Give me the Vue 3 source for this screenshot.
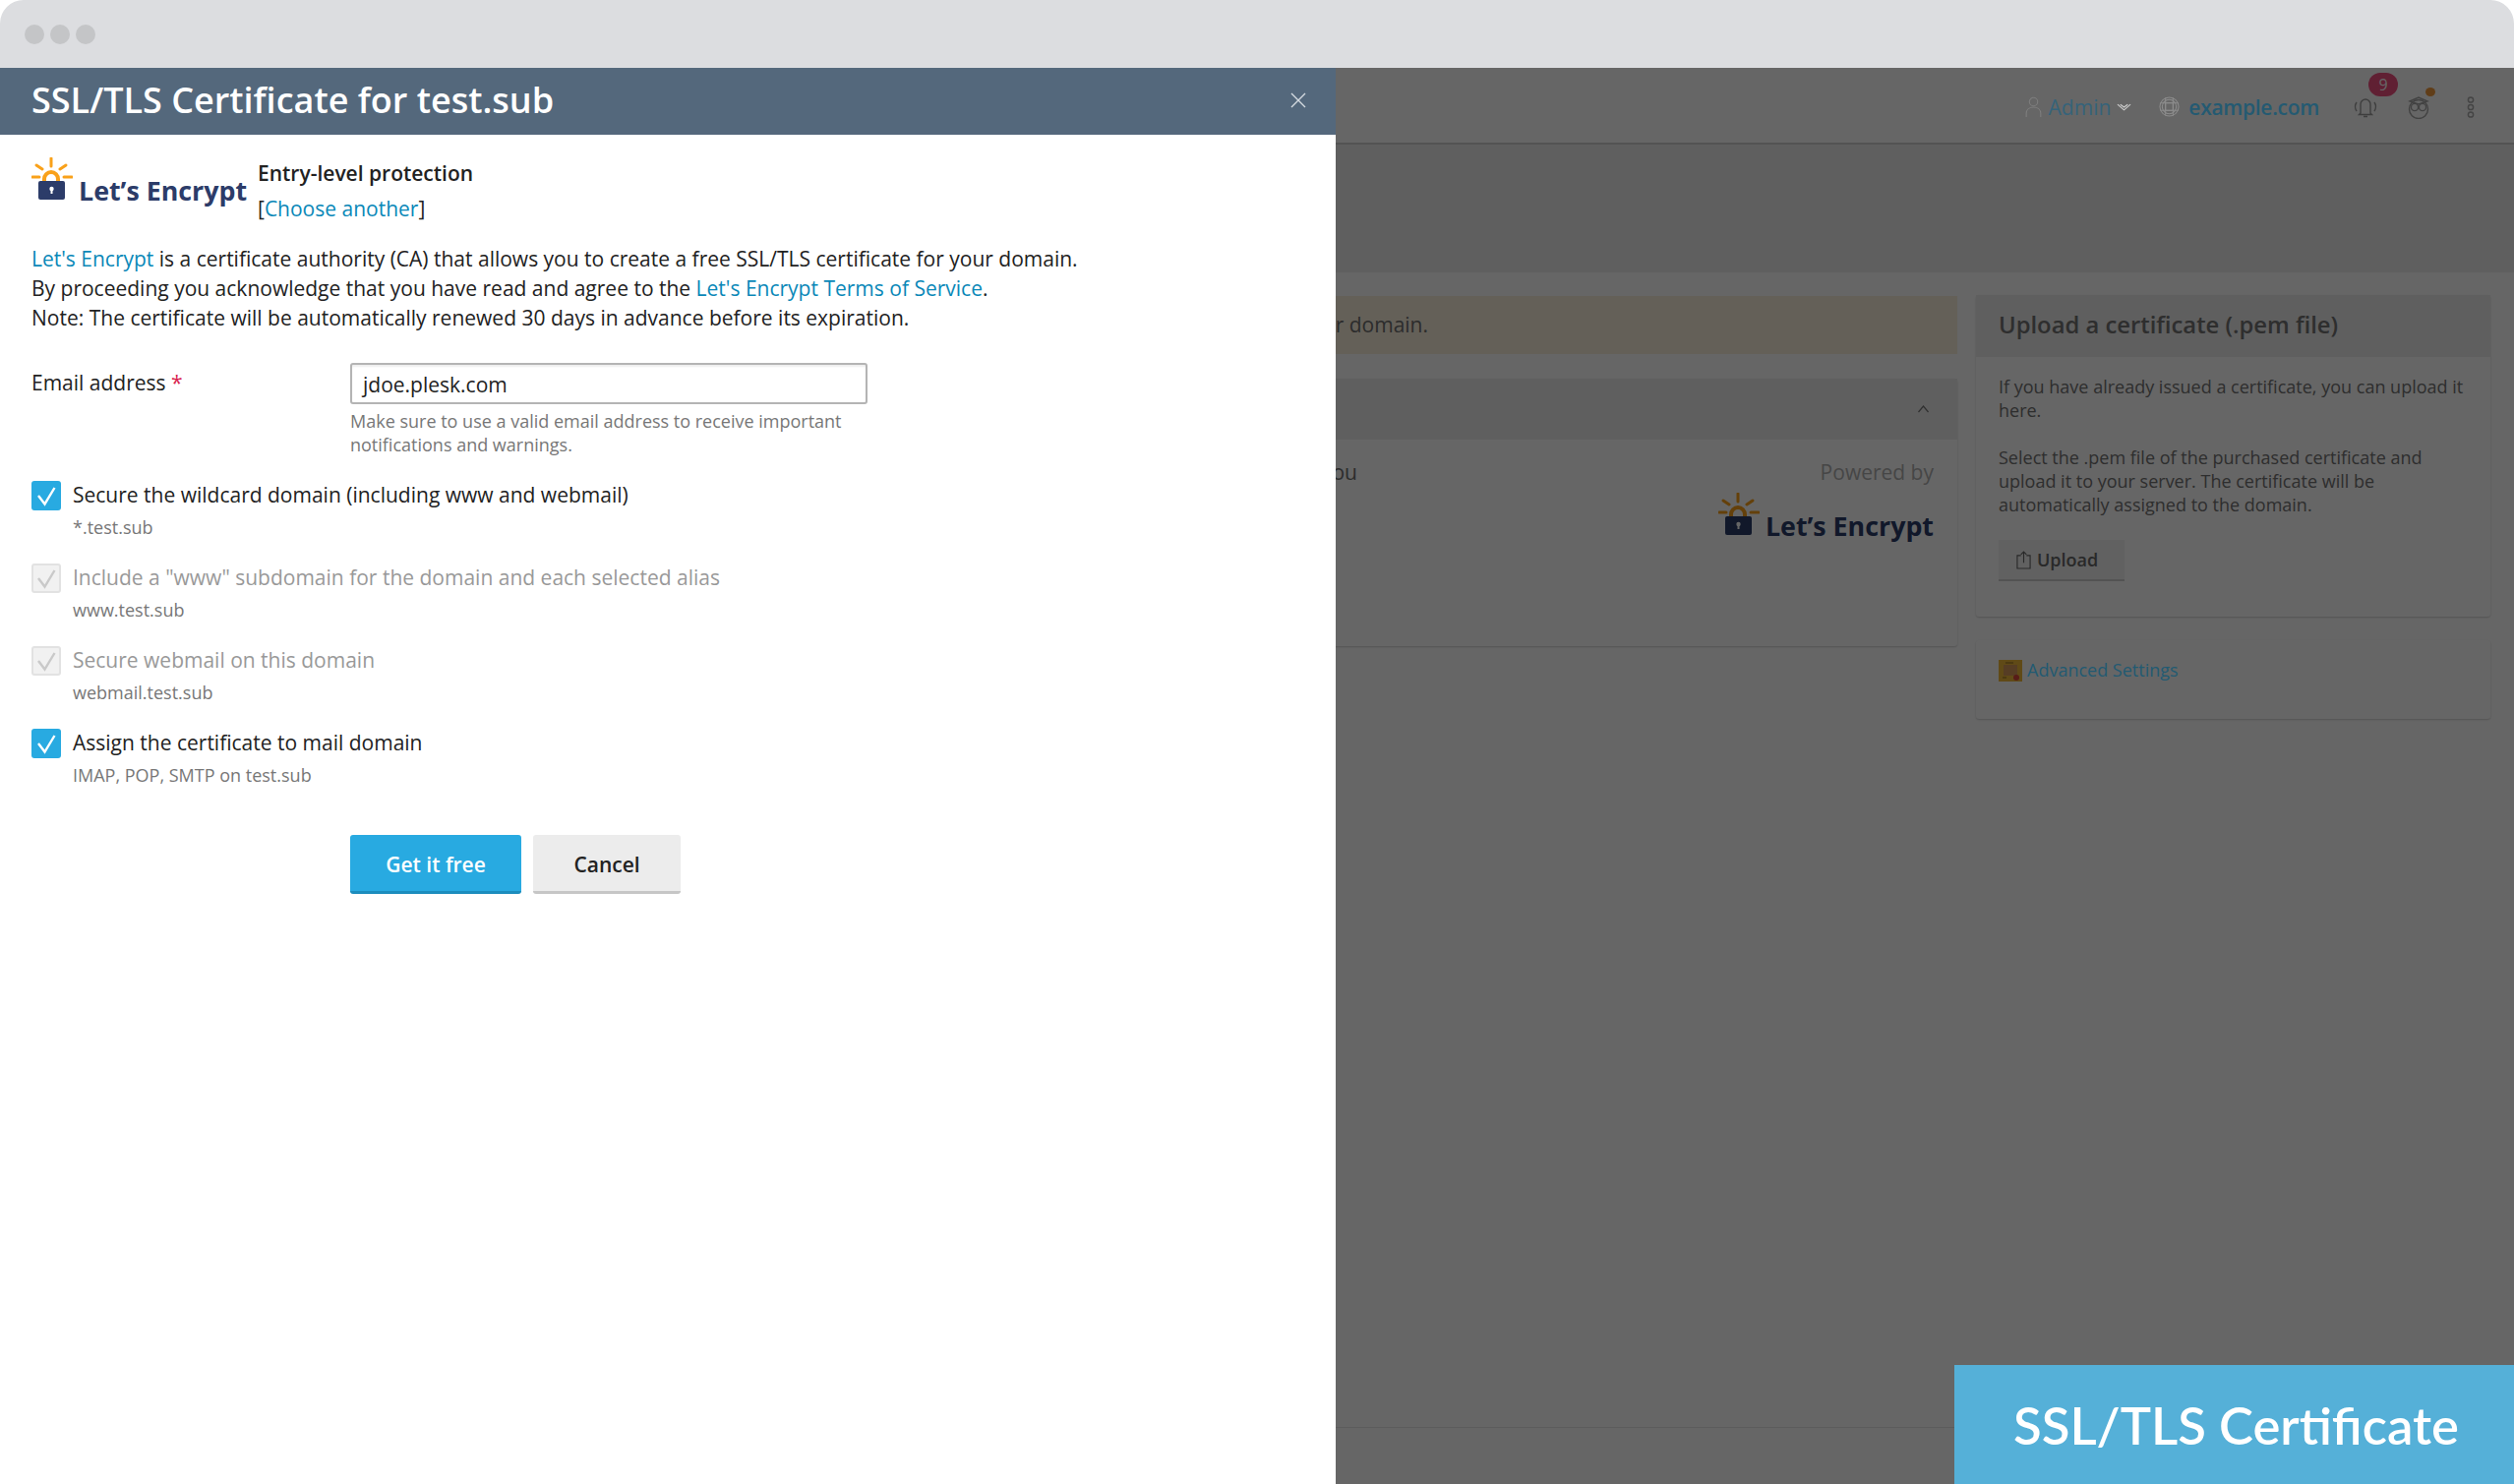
<script setup>
const options = [
  { label: 'Secure the wildcard domain (including www and webmail)', sub: '*.test.sub', disabled: false },
  { label: 'Include a "www" subdomain for the domain and each selected alias', sub: 'www.test.sub', disabled: true },
  { label: 'Secure webmail on this domain', sub: 'webmail.test.sub', disabled: true },
  { label: 'Assign the certificate to mail domain', sub: 'IMAP, POP, SMTP on test.sub', disabled: false },
]
</script>

<template>
  <div class="window">
    <div class="chrome">
      <i class="dot"></i><i class="dot"></i><i class="dot"></i>
    </div>
    <div class="stage">
      <div class="page">
        <header class="topbar">
          <svg class="ic-user" viewBox="0 0 18 24" fill="none" stroke="currentColor" stroke-width="1.2"><circle cx="9" cy="6" r="4.6"/><path d="M1 23v-4c0-4 3-7 8-7s8 3 8 7v4"/></svg>
          <span class="admin">Admin</span>
          <svg class="ic-chev" viewBox="0 0 16 10" fill="none" stroke="currentColor" stroke-width="1.2"><path d="M1 2l7 6 7-6M4 2l4 3 4-3"/></svg>
          <svg class="ic-globe" viewBox="0 0 22 22" fill="none" stroke="currentColor" stroke-width="1.1"><circle cx="11" cy="11" r="10"/><circle cx="11" cy="11" r="7.5"/><rect x="7" y="7" width="8" height="8"/><path d="M7 1.5v19M15 1.5v19M1.5 7h19M1.5 15h19"/></svg>
          <span class="domain">example.com</span>
          <span class="bell">
            <svg viewBox="0 0 26 22" fill="none" stroke="currentColor" stroke-width="1.4"><path d="M8 17V8a5 5 0 0 1 10 0v9l1.5 1.5h-13zM11 20.5h4M4 6c-2 3-2 6 0 9M22 6c2 3 2 6 0 9"/></svg>
            <b class="badge">9</b>
          </span>
          <span class="owl">
            <svg viewBox="0 0 22 24" fill="none" stroke="currentColor" stroke-width="1.4"><circle cx="11" cy="14" r="9.5"/><circle cx="7" cy="12" r="3.6"/><circle cx="15" cy="12" r="3.6"/><path d="M2 6l9-4 9 4-9 3z"/></svg>
            <i class="owl-dot"></i>
          </span>
          <svg class="ic-more" viewBox="0 0 8 22" fill="none" stroke="currentColor" stroke-width="1.5"><circle cx="4" cy="3.5" r="2.6"/><circle cx="4" cy="11" r="2.6"/><circle cx="4" cy="18.5" r="2.6"/></svg>
        </header>
        <div class="title-band"></div>
        <main class="content">
          <div class="col-left">
            <div class="warning">Please note that a certificate is required to secure your domain.</div>
            <section class="panel">
              <div class="panel-head">
                <svg class="ic-up" viewBox="0 0 12 8" fill="none" stroke="currentColor" stroke-width="1.2"><path d="M1 7l5-6 5 6"/></svg>
              </div>
              <div class="panel-body">
                <span class="lead">Choose the certificate that suits you</span>
                <div class="powered">
                  <span class="powered-by">Powered by</span>
                  <span class="le-logo">
                    <svg viewBox="0 0 42 44" class="le-mark"><g stroke="#f9a11a" stroke-width="3" stroke-linecap="round" fill="none"><path d="M20 1v8M5 8l6 4M35 8l-6 4M1 20h7M33 20h8"/><path d="M13 25v-3a7 7 0 0 1 14 0v3" stroke-width="4" stroke-linecap="butt"/></g><rect x="7" y="24" width="27" height="19" rx="2" fill="#2c3c69"/><circle cx="20.5" cy="32" r="2.2" fill="#fff"/><rect x="19.5" y="32" width="2" height="5" fill="#fff"/></svg>
                    <span class="le-text">Let’s Encrypt</span>
                  </span>
                </div>
              </div>
            </section>
          </div>
          <div class="col-right">
            <section class="card">
              <h3 class="card-head">Upload a certificate (.pem file)</h3>
              <div class="card-body">
                <p>If you have already issued a certificate, you can upload it here.</p>
                <p>Select the .pem file of the purchased certificate and upload it to your server. The certificate will be automatically assigned to the domain.</p>
                <span class="upload">
                  <svg viewBox="0 0 16 20" fill="none" stroke="currentColor" stroke-width="1.2"><path d="M5 5H1v14h14V5h-4M8 13V1M5 4l3-3 3 3"/></svg>
                  Upload
                </span>
              </div>
            </section>
            <section class="card adv">
              <svg viewBox="0 0 24 22" class="ic-adv"><rect width="24" height="22" fill="#f0b93a"/><rect x="5" y="5" width="14" height="11" fill="#d89a5a"/><path d="M7 3h8M4 18h4" stroke="#8a6a20"/><circle cx="18" cy="18" r="3" fill="#d9463c"/></svg>
              <a class="adv-link">Advanced Settings</a>
            </section>
          </div>
        </main>
        <footer class="page-foot"></footer>
      </div>

      <div class="overlay"></div>

      <aside class="drawer">
        <div class="drawer-head">
          <h2>SSL/TLS Certificate for test.sub</h2>
          <svg class="close" viewBox="0 0 16 16" fill="none" stroke="currentColor" stroke-width="1.4"><path d="M1 1l14 14M15 1L1 15"/></svg>
        </div>
        <div class="drawer-body">
          <div class="provider">
            <span class="le-logo">
              <svg viewBox="0 0 42 44" class="le-mark"><g stroke="#f9a11a" stroke-width="3" stroke-linecap="round" fill="none"><path d="M20 1v8M5 8l6 4M35 8l-6 4M1 20h7M33 20h8"/><path d="M13 25v-3a7 7 0 0 1 14 0v3" stroke-width="4" stroke-linecap="butt"/></g><rect x="7" y="24" width="27" height="19" rx="2" fill="#2c3c69"/><circle cx="20.5" cy="32" r="2.2" fill="#fff"/><rect x="19.5" y="32" width="2" height="5" fill="#fff"/></svg>
              <span class="le-text">Let’s Encrypt</span>
            </span>
            <div class="provider-info">
              <strong>Entry-level protection</strong>
              <span>[<a>Choose another</a>]</span>
            </div>
          </div>
          <p class="intro">
            <a>Let's Encrypt</a> is a certificate authority (CA) that allows you to create a free SSL/TLS certificate for your domain.<br>
            By proceeding you acknowledge that you have read and agree to the <a>Let's Encrypt Terms of Service</a>.<br>
            Note: The certificate will be automatically renewed 30 days in advance before its expiration.
          </p>
          <div class="field">
            <label>Email address <em>*</em></label>
            <div class="field-main">
              <div class="input">jdoe.plesk.com</div>
              <p class="hint">Make sure to use a valid email address to receive important notifications and warnings.</p>
            </div>
          </div>
          <div class="options">
            <div v-for="o in options" :key="o.sub" class="option" :class="{ off: o.disabled }">
              <span class="box">
                <svg viewBox="0 0 30 30" fill="none" stroke="currentColor" stroke-width="2.4"><path d="M7 15l6.5 8.5L23.5 7"/></svg>
              </span>
              <div class="option-text">
                <div class="option-label">{{ o.label }}</div>
                <div class="option-sub">{{ o.sub }}</div>
              </div>
            </div>
          </div>
          <div class="actions">
            <button class="btn primary">Get it free</button>
            <button class="btn">Cancel</button>
          </div>
        </div>
      </aside>

      <div class="tag">SSL/TLS Certificate</div>
    </div>
  </div>
</template>

<style>
html, body { margin: 0; background: #fff; }
</style>

<style scoped>
.window { width: 2556px; height: 1509px; display: flex; flex-direction: column; overflow: hidden; font-family: "Open Sans", "Liberation Sans", sans-serif; font-size: 21px; line-height: 30px; color: #222; }
.chrome { height: 69px; flex: none; background: #dcdde0; border-radius: 24px 24px 0 0; display: flex; align-items: center; gap: 6px; padding: 0 25px; box-sizing: border-box; }
.dot { width: 20px; height: 20px; border-radius: 50%; background: #c4c5c7; }
.stage { flex: 1; position: relative; overflow: hidden; }
.page { height: 100%; display: flex; flex-direction: column; background: #fff; }
.topbar { height: 78px; flex: none; box-sizing: border-box; border-bottom: 2px solid #cfcfcf; display: flex; align-items: center; justify-content: flex-end; padding-right: 40px; padding-top: 3px; position: relative; color: #9a9a9a; }
.ic-user { width: 17px; height: 22px; color: #7e7e7e; margin-right: 7px; position: relative; z-index: 1; }
.admin { color: #35637a; position: relative; z-index: 1; }
.ic-chev { width: 15px; height: 10px; margin: 0 28px 0 6px; color: #cfcfcf; position: relative; z-index: 1; }
.ic-globe { width: 21px; height: 21px; margin-right: 9px; color: #8c8c8c; position: relative; z-index: 1; }
.domain { color: #245a72; font-weight: 600; letter-spacing: -.3px; margin-right: 34px; position: relative; z-index: 1; }
.bell { width: 26px; height: 22px; margin-right: 30px; position: relative; color: #9c9c9c; }
.bell svg, .owl svg { display: block; width: 100%; height: 100%; }
.badge { position: absolute; left: 16px; top: -24px; width: 30px; height: 24px; border-radius: 12px; background: #f05080; color: #fff; font-size: 16px; line-height: 24px; font-weight: 400; text-align: center; }
.owl { width: 22px; height: 24px; margin-right: 38px; position: relative; color: #a5a5a5; }
.owl-dot { position: absolute; right: -6px; top: -8px; width: 10px; height: 9px; border-radius: 50%; background: #f09a3e; }
.ic-more { width: 8px; height: 22px; color: #aaa; }
.title-band { height: 130px; flex: none; background: #eeeeee; }
.content { flex: 1; display: grid; grid-template-columns: 1fr 523px; gap: 19px; padding: 23px 24px 0; align-items: start; }
.col-left { display: flex; flex-direction: column; gap: 25px; padding-top: 1px; }
.warning { height: 59px; background: #faf1dd; display: flex; align-items: center; justify-content: flex-end; padding-right: 538px; padding-bottom: 2px; box-sizing: border-box; color: #6e6e6e; white-space: nowrap; }
.panel { height: 272px; border-radius: 3px; box-shadow: 0 1px 2px #d0d0d0; }
.panel-head { height: 62px; background: #ededed; display: flex; align-items: center; justify-content: flex-end; padding-right: 28px; }
.ic-up { width: 13px; height: 8px; color: #777; }
.panel-body { display: flex; justify-content: space-between; padding: 18px 24px 0 0; }
.lead { color: #6e6e6e; width: 1356px; text-align: right; }
.powered { display: flex; flex-direction: column; align-items: flex-end; gap: 6px; }
.powered-by { color: #b0b0b0; }
.le-logo { display: flex; align-items: flex-start; gap: 6px; }
.le-mark { width: 42px; height: 44px; display: block; flex: none; }
.le-text { font-family: "Open Sans", sans-serif; font-weight: 700; font-size: 26.8px; line-height: 30px; color: #2c3c69; white-space: nowrap; margin-top: 19px; }
.col-right { display: flex; flex-direction: column; gap: 24px; }
.card { border-radius: 3px; box-shadow: 0 1px 2px #d0d0d0; }
.card-head { margin: 0; height: 63px; box-sizing: border-box; padding: 0 23px 3px; background: #ededed; display: flex; align-items: center; font-size: 23.8px; font-weight: 600; color: #737373; }
.card-body { height: 264px; box-sizing: border-box; padding: 18px 23px 0; font-size: 18px; line-height: 24px; color: #737373; }
.card-body p { margin: 0 0 24px; }
.upload { display: flex; align-items: center; gap: 6px; width: 128px; height: 42px; box-sizing: border-box; padding: 0 18px; margin-top: 0; background: #f2f2f2; border-bottom: 2px solid #d0d0d0; font-weight: 600; color: #666; }
.upload svg { width: 15px; height: 19px; }
.adv { height: 80px; box-sizing: border-box; padding: 19px 23px; display: flex; gap: 5px; align-items: flex-start; font-size: 18px; line-height: 22px; }
.ic-adv { width: 24px; height: 22px; flex: none; margin-top: 1px; }
.adv-link { color: #225a72; position: relative; z-index: 1; }
.page-foot { height: 57px; flex: none; border-top: 1px solid #e6e6e6; }
.overlay { position: absolute; inset: 0; background: rgba(0, 0, 0, .6); }
.drawer { position: absolute; left: 0; top: 0; bottom: 0; width: 1358px; background: #fff; display: flex; flex-direction: column; z-index: 2; }
.drawer-head { height: 68px; flex: none; background: #54687c; display: flex; align-items: center; justify-content: space-between; padding: 0 30px 0 32px; color: #fff; }
.drawer-head h2 { margin: 0 0 2px; font-size: 36px; line-height: 44px; font-weight: 600; }
.close { width: 16px; height: 16px; color: #d5dbe1; margin-bottom: 3px; }
.drawer-body { padding: 24px 32px 0; }
.provider { display: flex; gap: 12px; }
.provider .le-logo { width: 218px; height: 46px; margin-top: -1px; }
.provider-info { display: flex; flex-direction: column; gap: 6px; color: #222; }
.provider-info strong { font-weight: 600; }
a { color: #0a88b8; }
.intro { margin: 21px 0 0; }
.field { display: flex; margin-top: 31px; }
.field label { width: 324px; flex: none; padding-top: 5px; }
.field em { color: #d9234f; font-style: normal; }
.field-main { width: 526px; }
.input { height: 42px; box-sizing: border-box; border: 2px solid #b4b4b4; border-radius: 3px; padding: 2px 11px 0; display: flex; align-items: center; box-shadow: inset 0 2px 2px #eee; }
.hint { margin: 5px 0 1px; font-size: 18px; line-height: 24px; color: #777; }
.options { margin-top: 24px; display: flex; flex-direction: column; }
.option { display: flex; gap: 12px; height: 84px; box-sizing: border-box; }
.box { width: 30px; height: 30px; box-sizing: border-box; flex: none; border-radius: 3px; background: #28aae1; color: #fff; display: block; }
.box svg { display: block; width: 30px; height: 30px; }
.off .box { background: #f1f1f1; border: 2px solid #e2e2e2; color: #c9c9c9; }
.off .box svg { margin: -2px; }
.option-label { line-height: 29px; }
.off .option-label { color: #999; }
.option-sub { margin-top: 6px; font-size: 18px; line-height: 24px; color: #777; }
.actions { display: flex; gap: 12px; margin-top: 24px; padding-left: 324px; }
.btn { height: 60px; box-sizing: border-box; padding: 2px 0 0; width: 150px; border: 0; border-bottom: 3px solid #c6c6c6; border-radius: 3px; background: #ececec; font: inherit; font-weight: 600; color: #222; }
.btn.primary { width: 174px; background: #28aae1; border-bottom-color: #1c8dbd; color: #fff; }
.tag { position: absolute; right: 0; bottom: 0; width: 569px; height: 121px; box-sizing: border-box; padding-left: 60px; background: #55b0d8; color: #fff; font-family: Lato, "Open Sans", sans-serif; font-size: 52.6px; font-weight: 600; display: flex; align-items: center; z-index: 3; }
</style>
